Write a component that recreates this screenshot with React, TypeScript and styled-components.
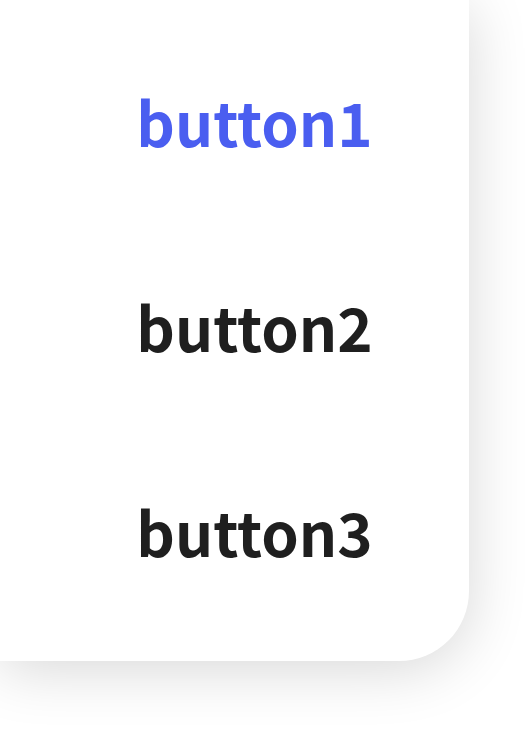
import React from "react";
import styled, { createGlobalStyle } from "styled-components";

const GlobalStyle = createGlobalStyle`
  html, body {
    margin: 0;
    padding: 0;
    background: #ffffff;
  }
  body {
    font-family: "Noto Sans CJK SC", "Noto Sans", sans-serif;
  }
`;

const buttons = ["button1", "button2", "button3"];

const App: React.FC = () => {
  const [active, setActive] = React.useState(0);
  return (
    <>
      <GlobalStyle />
      <Page>
        <Card>
          <Menu>
            {buttons.map((label, i) => (
              <MenuButton
                key={label}
                $active={i === active}
                onClick={() => setActive(i)}
              >
                {label}
              </MenuButton>
            ))}
          </Menu>
        </Card>
      </Page>
    </>
  );
};

export default App;

const Page = styled.div`
  width: 528px;
  height: 732px;
  overflow: hidden;
`;

const Card = styled.div`
  width: 469px;
  height: 661px;
  background-color: white;
  border-radius: 0 0 70px 0;
  box-shadow: 0 8px 60px rgba(0, 0, 0, 0.16);
`;

const Menu = styled.div`
  display: flex;
  flex-direction: column;
  padding: 18px 0 0 40px;
`;

const MenuButton = styled.button<{ $active: boolean }>`
  height: 205px;
  border: none;
  background: none;
  padding: 0;
  font-family: "Noto Sans CJK SC", "Noto Sans", sans-serif;
  font-size: 60px;
  font-weight: 700;
  color: ${(p) => (p.$active ? "#4a5ef0" : "#1f1f1f")};
  text-align: center;
  cursor: pointer;
`;
